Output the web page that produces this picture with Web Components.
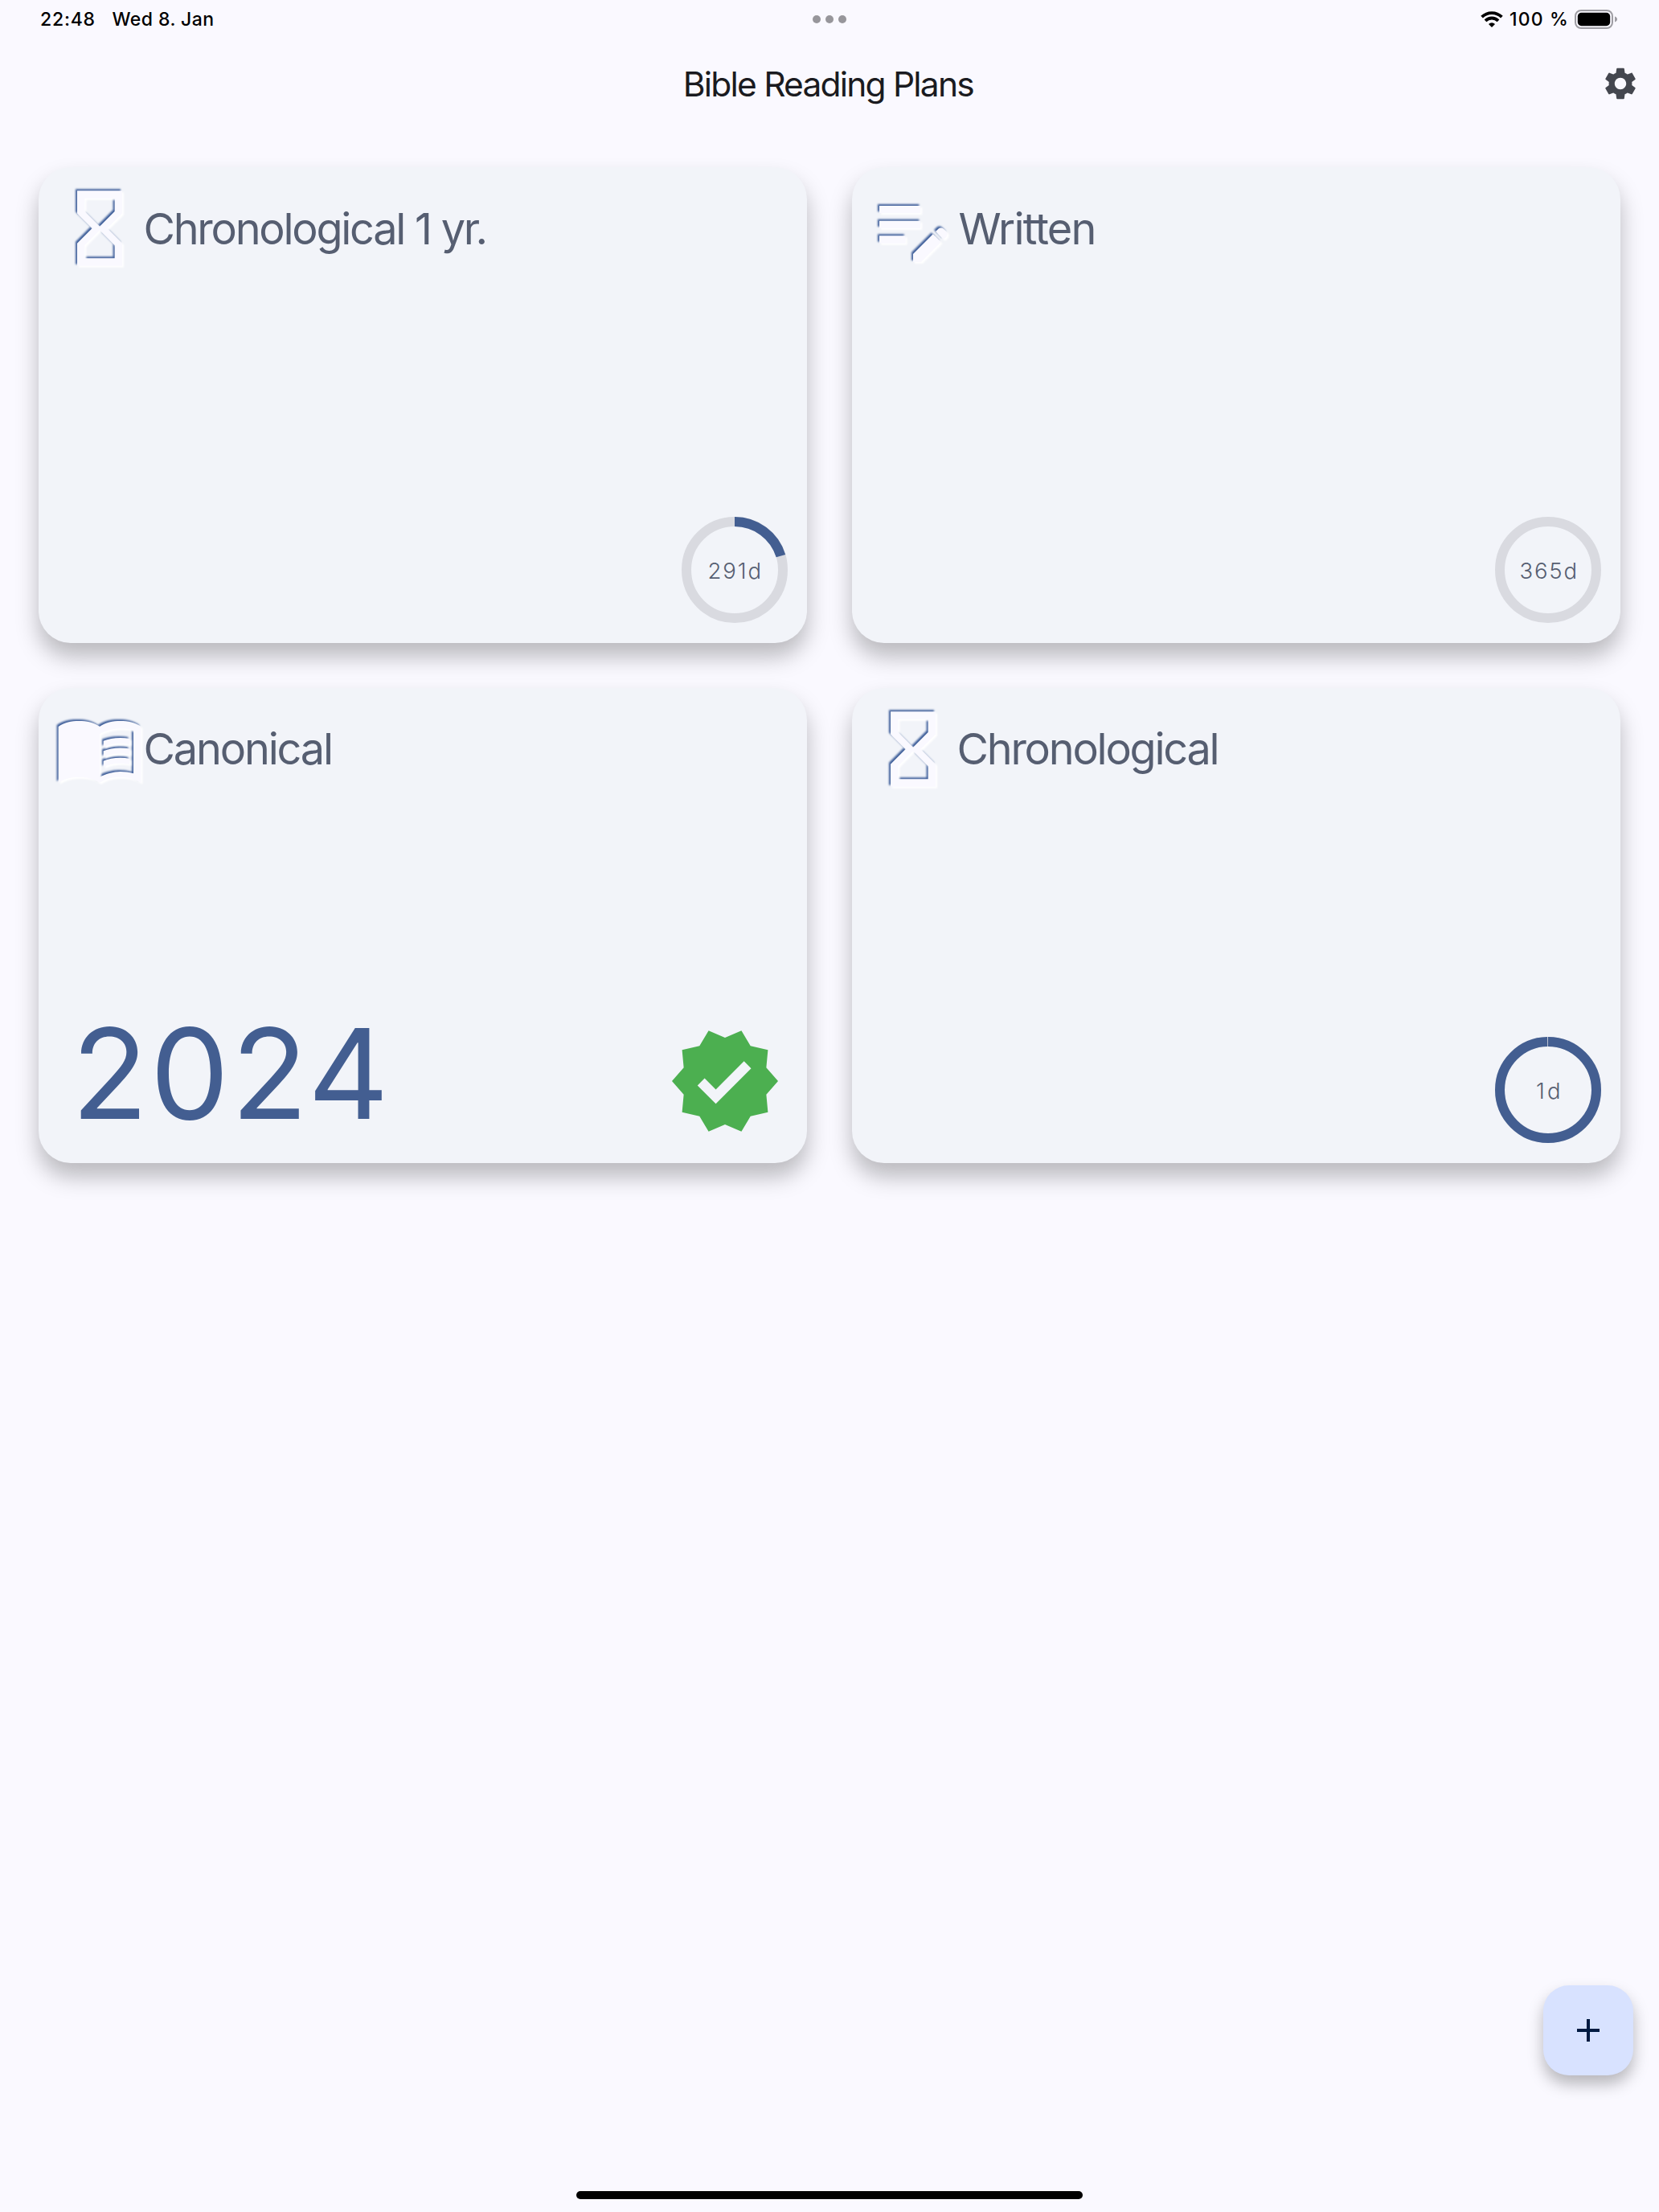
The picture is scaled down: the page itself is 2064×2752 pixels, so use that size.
<!DOCTYPE html>
<html lang="en">
<head>
<meta charset="utf-8">
<title>Bible Reading Plans</title>
<style>
html,body{margin:0;height:100%}
body{background:#faf9ff;font-family:Inter,"Liberation Sans",sans-serif;color:#1a1b20;overflow:hidden}
</style>
</head>
<body>
<plans-app></plans-app>
<script>
const define = (name, cls) => customElements.define(name, cls);
const shadow = (el, html) => { el.attachShadow({mode:'open'}).innerHTML = html; };

// A single-line label whose ink is tracked to fill exactly the width it is given.
define('fit-label', class extends HTMLElement {
  connectedCallback() {
    const w = +this.getAttribute('width'), size = +this.getAttribute('size');
    const weight = this.getAttribute('weight') || 400, text = this.getAttribute('text');
    const ctx = document.createElement('canvas').getContext('2d');
    ctx.font = `${weight} ${size}px Inter`;
    const m = ctx.measureText(text);
    const ink = m.actualBoundingBoxRight + m.actualBoundingBoxLeft;
    const ls = (w - ink) / (text.length - 1);
    shadow(this, `<style>
      :host{display:block;width:${w}px;white-space:pre}
      span{display:block;font-size:${size}px;font-weight:${weight};letter-spacing:${ls.toFixed(3)}px;margin-left:${m.actualBoundingBoxLeft.toFixed(2)}px;line-height:1.2}
    </style><span></span>`);
    this.shadowRoot.querySelector('span').textContent = text;
  }
});

define('status-bar', class extends HTMLElement {
  connectedCallback() {
    shadow(this, `<style>
      :host{display:grid;grid-template-columns:1fr auto 1fr;align-items:center;height:48px;padding:0 52px 0 51px;color:#000;box-sizing:border-box}
      .l,.r{display:flex;align-items:center}
      .l{gap:22px}.r{justify-content:flex-end}
      fit-label{margin-top:1px}
      .dots{display:flex;gap:6px;margin-right:-1px}
      i{width:10px;height:10px;border-radius:50%;background:#97969b}
      svg{display:block}
      .wifi{margin-right:9px}.bat{margin-left:10px}
    </style>
    <div class="l"><fit-label text="22:48" size="23" weight="500" width="66.5"></fit-label><fit-label text="Wed 8. Jan" size="23" weight="500" width="126"></fit-label></div>
    <div class="dots"><i></i><i></i><i></i></div>
    <div class="r">
      <svg class="wifi" width="28" height="20" viewBox="0 0 28 20"><g fill="none" stroke="#000" stroke-width="3.8"><path d="M1.6 7.2a17.6 17.6 0 0 1 24.8 0"/><path d="M6 11.8a11.3 11.3 0 0 1 16 0"/></g><path d="M14 20l4-4.1a5.8 5.8 0 0 0-8 0z"/></svg>
      <fit-label text="100 %" size="23" weight="500" width="70"></fit-label>
      <svg class="bat" width="53" height="24" viewBox="0 0 53 24"><rect x="1" y="1" width="46" height="22" rx="7" fill="none" stroke="#9e9da3" stroke-width="2"/><rect x="3.8" y="3.8" width="40.4" height="16.4" rx="4.6"/><path d="M50 8.6c4 1.2 4 5.6 0 6.8z" fill="#9e9da3"/></svg>
    </div>`);
  }
});

define('app-bar', class extends HTMLElement {
  connectedCallback() {
    shadow(this, `<style>
      :host{display:grid;grid-template-columns:1fr auto 1fr;align-items:center;height:112px;padding:0 24px;box-sizing:border-box}
      svg{justify-self:end;display:block;fill:#44474f}
    </style><span></span><fit-label text="Bible Reading Plans" size="42.5" width="358.5"></fit-label>
    <svg width="48" height="48" viewBox="0 0 24 24"><path d="M19.14 12.94c.04-.3.06-.61.06-.94 0-.32-.02-.64-.07-.94l2.03-1.58c.18-.14.23-.41.12-.61l-1.92-3.32c-.12-.22-.37-.29-.59-.22l-2.39.96c-.5-.38-1.03-.7-1.62-.94L14.4 2.81c-.04-.24-.24-.41-.48-.41h-3.84c-.24 0-.43.17-.47.41L9.25 5.35c-.59.24-1.13.57-1.62.94L5.24 5.33c-.22-.08-.47 0-.59.22L2.74 8.87c-.12.21-.08.47.12.61l2.03 1.58c-.05.3-.09.63-.09.94s.02.64.07.94l-2.03 1.58c-.18.14-.23.41-.12.61l1.92 3.32c.12.22.37.29.59.22l2.39-.96c.5.38 1.03.7 1.62.94l.36 2.54c.05.24.24.41.48.41h3.84c.24 0 .44-.17.47-.41l.36-2.54c.59-.24 1.13-.56 1.62-.94l2.39.96c.22.08.47 0 .59-.22l1.92-3.32c.12-.22.07-.47-.12-.61l-2.01-1.58zM12 15.6c-1.98 0-3.6-1.62-3.6-3.6s1.62-3.6 3.6-3.6 3.6 1.62 3.6 3.6-1.62 3.6-3.6 3.6z"/></svg>`);
  }
});

const ICONS = {
  hourglass: 'M6 2v6h.01L6 8.01 10 12l-4 4 .01.01H6V22h12v-5.99h-.01L18 16l-4-4 4-3.99-.01-.01H18V2H6zm10 14.5V20H8v-3.5l4-4 4 4zm-4-5l-4-4V4h8v3.5l-4 4z',
  note: 'M3 10h11v2H3v-2zm0-2h11V6H3v2zm0 8h7v-2H3v2zm15.01-3.13l.71-.71c.39-.39 1.02-.39 1.41 0l.71.71c.39.39.39 1.02 0 1.41l-.71.71-2.12-2.12zm-.71.71l-5.3 5.3V21h2.12l5.3-5.3-2.12-2.12z',
  book: 'M17.5 4.5c-1.95 0-4.05.4-5.5 1.5-1.45-1.1-3.55-1.5-5.5-1.5S2.45 4.9 1 6v15c1.45-1.1 3.55-1.5 5.5-1.5s4.05.4 5.5 1.5c1.45-1.1 3.55-1.5 5.5-1.5s4.05.4 5.5 1.5V6c-1.45-1.1-3.55-1.5-5.5-1.5zm3.5 14c-1.1-.35-2.3-.5-3.5-.5-1.7 0-4.15.65-5.5 1.5V8c1.35-.85 3.8-1.5 5.5-1.5 1.2 0 2.4.15 3.5.5v11.5zM17.5 10.5c.88 0 1.73.09 2.5.26V9.24c-.79-.15-1.64-.24-2.5-.24-1.7 0-3.24.29-4.5.83v1.66c1.13-.64 2.7-.99 4.5-.99zM13 12.49v1.66c1.13-.64 2.7-.99 4.5-.99.88 0 1.73.09 2.5.26V11.9c-.79-.15-1.64-.24-2.5-.24-1.7 0-3.24.3-4.5.83zM17.5 14.33c-1.7 0-3.24.29-4.5.83v1.66c1.13-.64 2.7-.99 4.5-.99.88 0 1.73.09 2.5.26v-1.52c-.79-.16-1.64-.24-2.5-.24z'
};

// Embossed glyph: blue edge on the upper left, white edge on the lower right.
define('embossed-icon', class extends HTMLElement {
  connectedCallback() {
    const glyph = `<path transform="scale(4.66667)" d="${ICONS[this.getAttribute('name')]}"/>`;
    shadow(this, `<style>
      :host{display:block;width:112px;height:112px}
      svg{display:block;overflow:visible}
      .b{fill:#3f5f9a;filter:blur(.9px);transform:translate(-2px,-2px)}
      .w{fill:#fff;filter:blur(1px);transform:translate(2px,2px)}
      .f{fill:#faf9ff}
    </style><svg width="112" height="112" viewBox="0 0 112 112" fill-rule="evenodd"><g class="b">${glyph}</g><g class="w">${glyph}</g><g class="f">${glyph}</g></svg>`);
  }
});

define('progress-ring', class extends HTMLElement {
  connectedCallback() {
    const days = +this.getAttribute('days'), done = +this.getAttribute('done');
    const c = 2 * Math.PI * 60;
    shadow(this, `<style>
      :host{display:grid;place-items:center;width:132px;height:132px;color:#565e71}
      svg,.t{grid-area:1/1}
      .t{margin-top:2px}
    </style><svg width="132" height="132" viewBox="0 0 132 132" fill="none" stroke-width="12"><circle cx="66" cy="66" r="60" stroke="#d9dae0"/>
    ${done ? `<circle cx="66" cy="66" r="60" stroke="#435e91" stroke-dasharray="${c * done / 365} ${c}" transform="rotate(-90 66 66)"/>` : ''}</svg>
    <fit-label class="t" text="${days}d" size="27.5" weight="300" width="${this.getAttribute('ink')}"></fit-label>`);
  }
});

define('done-badge', class extends HTMLElement {
  connectedCallback() {
    shadow(this, `<style>:host{display:block}svg{display:block}</style>
    <svg width="144" height="144" viewBox="0 0 24 24" fill="#4caf50"><path d="M23 12l-2.44-2.78.34-3.68-3.61-.82-1.89-3.18L12 3 8.6 1.54 6.71 4.72l-3.61.81.34 3.68L1 12l2.44 2.78-.34 3.69 3.61.82 1.89 3.18L12 21l3.4 1.46 1.89-3.18 3.61-.82-.34-3.68L23 12zm-12.91 4.72l-3.8-3.81 1.48-1.48 2.32 2.33 5.85-5.87 1.48 1.48-7.33 7.35z"/></svg>`);
  }
});

define('plan-card', class extends HTMLElement {
  connectedCallback() {
    shadow(this, `<style>
      :host{display:flex;flex-direction:column;justify-content:space-between;box-sizing:border-box;height:591.25px;border-radius:40px;background:#f2f4f9;box-shadow:0 17px 28px rgba(0,0,0,.26);color:#565e71}
      header{display:flex;align-items:center;padding:20px 0 0 20px;gap:1.5px}
      fit-label{margin-top:2px}
      footer{display:flex;align-items:flex-end;justify-content:flex-end}
    </style><header><embossed-icon name="${this.getAttribute('icon')}"></embossed-icon><fit-label text="${this.getAttribute('name')}" size="54" width="${this.getAttribute('ink')}"></fit-label></header>
    <footer><slot></slot></footer>`);
  }
});

define('add-button', class extends HTMLElement {
  connectedCallback() {
    shadow(this, `<style>
      :host{display:grid;place-items:center;width:112px;height:112px;border-radius:32px;background:#d8e2ff;box-shadow:0 11px 19px rgba(0,0,0,.27)}
      svg{display:block}
    </style><svg width="48" height="48" viewBox="0 0 24 24" fill="#001a41"><path d="M19 13h-6v6h-2v-6H5v-2h6V5h2v6h6v2z"/></svg>`);
  }
});

define('plans-app', class extends HTMLElement {
  connectedCallback() {
    shadow(this, `<style>
      :host{display:flex;flex-direction:column;width:2064px;height:2752px;background:#faf9ff}
      main{display:grid;grid-template-columns:1fr 1fr;gap:56px;padding:48.25px 48px 0;flex:1;align-content:start}
      progress-ring{margin:0 24px 24.5px 0}
      .year{flex:1;display:flex;padding-left:52px;color:#435e91;margin-bottom:18px}
      done-badge{margin:0 30px 30px 0}
      .fab{display:flex;justify-content:flex-end;padding:0 32px 144px 0}
      .home{width:630px;height:10px;border-radius:5px;background:#000;align-self:center;margin-bottom:16px}
    </style>
    <status-bar></status-bar><app-bar></app-bar>
    <main>
      <plan-card icon="hourglass" name="Chronological 1 yr." ink="422"><progress-ring days="291" done="74" ink="63"></progress-ring></plan-card>
      <plan-card icon="note" name="Written" ink="167"><progress-ring days="365" done="0" ink="69"></progress-ring></plan-card>
      <plan-card icon="book" name="Canonical" ink="229.5"><div class="year"><fit-label text="2024" size="156" width="375"></fit-label></div><done-badge></done-badge></plan-card>
      <plan-card icon="hourglass" name="Chronological" ink="320"><progress-ring days="1" done="363.6" ink="28"></progress-ring></plan-card>
    </main>
    <div class="fab"><add-button></add-button></div>
    <div class="home"></div>`);
  }
});
</script>
</body>
</html>
